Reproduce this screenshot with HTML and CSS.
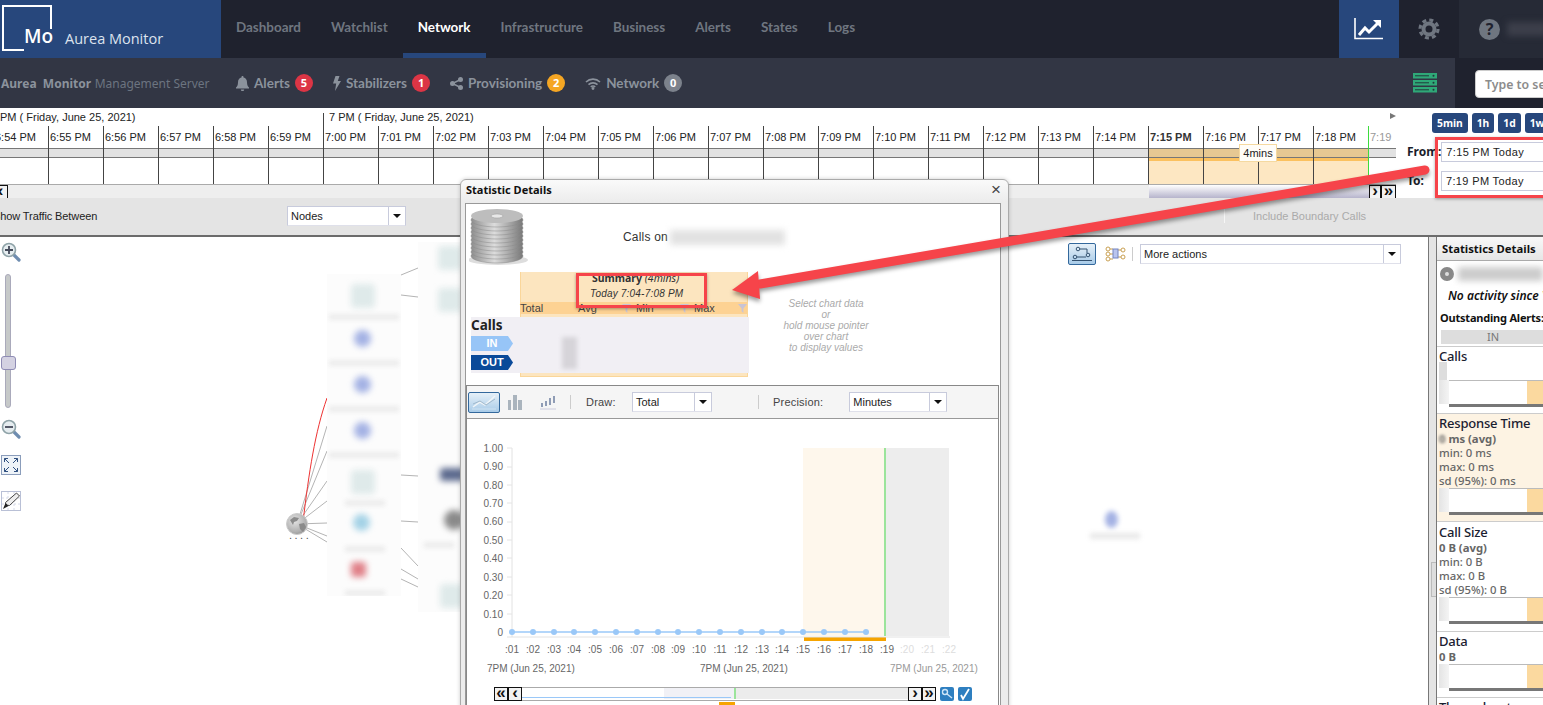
FILE: index.html
```html
<!DOCTYPE html>
<html lang="en">
<head>
    <meta charset="UTF-8">
    <title>Aurea Monitor</title>
    <link rel="stylesheet" href="styles.css">
</head>
<body>
<div class="app">

    <!-- Top bar -->
    <div class="topbar">
        <div class="brand">
            <div class="logo"><span>Mo</span></div>
            <div class="brand-name">Aurea Monitor</div>
        </div>
        <div class="nav">
            <a class="nav-item">Dashboard</a>
            <a class="nav-item">Watchlist</a>
            <a class="nav-item active">Network</a>
            <a class="nav-item">Infrastructure</a>
            <a class="nav-item">Business</a>
            <a class="nav-item">Alerts</a>
            <a class="nav-item">States</a>
            <a class="nav-item">Logs</a>
        </div>
        <div class="top-btn chart-btn">
            <svg width="30" height="22" viewBox="0 0 30 22"><path d="M1 0v20.500h28" fill="none" stroke="#fff" stroke-width="1.600"/><path d="M5 17l6-7 4 4 9-9" fill="none" stroke="#fff" stroke-width="3"/><path d="M19 2h8v8z" fill="#fff"/></svg>
        </div>
        <div class="top-btn">
            <svg width="22" height="22" viewBox="0 0 22 22"><circle cx="11" cy="11" r="5.500" fill="none" stroke="#6f7680" stroke-width="4"/><circle cx="11" cy="11" r="9" fill="none" stroke="#6f7680" stroke-width="3.200" stroke-dasharray="4 3.070"/></svg>
        </div>
        <div class="top-user">
            <span class="help">?</span>
            <span class="user-blur"></span>
        </div>
    </div>

    <!-- Server bar -->
    <div class="subbar">
        <div class="subbar-main">
            <div class="server-name"><b>Aurea&nbsp; Monitor</b> <span>Management Server</span></div>
            <div class="sub-item">
                <svg width="13" height="15" viewBox="0 0 13 15"><path d="M6.500 0c.6 0 1 .4 1 1v.6c2.300.5 3.500 2.400 3.500 4.600 0 3.300 1 4.400 2 5.300v1H0v-1c1-.9 2-2 2-5.300 0-2.200 1.200-4.100 3.500-4.600V1c0-.6.400-1 1-1zM4.800 13.500h3.400c0 1-.7 1.500-1.700 1.500s-1.700-.5-1.700-1.500z" fill="#8b929c"/></svg>
                Alerts <span class="count red">5</span>
            </div>
            <div class="sub-item">
                <svg width="8" height="15" viewBox="0 0 8 15"><path d="M2.500 0h4L4.800 5H8L2 15l1.200-7.500H0z" fill="#8b929c"/></svg>
                Stabilizers <span class="count red">1</span>
            </div>
            <div class="sub-item">
                <svg width="13" height="13" viewBox="0 0 13 13"><circle cx="2.500" cy="6.500" r="2.500" fill="#8b929c"/><circle cx="10.500" cy="2.500" r="2.500" fill="#8b929c"/><circle cx="10.500" cy="10.500" r="2.500" fill="#8b929c"/><path d="M10.500 2.500l-8 4 8 4" fill="none" stroke="#8b929c" stroke-width="1.400"/></svg>
                Provisioning <span class="count amber">2</span>
            </div>
            <div class="sub-item">
                <svg width="16" height="13" viewBox="0 0 16 13"><path d="M1 5a10 10 0 0 1 14 0M3.500 7.700a6.500 6.500 0 0 1 9 0M5.800 10a3 3 0 0 1 4.400 0" fill="none" stroke="#8b929c" stroke-width="1.600"/><circle cx="8" cy="11.500" r="1.400" fill="#8b929c"/></svg>
                Network <span class="count grey">0</span>
            </div>
            <svg class="server-stack" width="24" height="20" viewBox="0 0 24 20">
                <g fill="#2fa878"><rect width="24" height="5.500"/><rect y="7" width="24" height="5.500"/><rect y="14" width="24" height="5.500"/></g>
                <g stroke="#1f3a3a" stroke-width="1"><path d="M2 2.800h14M2 9.800h14M2 16.800h14"/></g>
                <g fill="#1f3a3a"><circle cx="20.500" cy="2.800" r="1"/><circle cx="20.500" cy="9.800" r="1"/><circle cx="20.500" cy="16.800" r="1"/></g>
            </svg>
        </div>
        <div class="subbar-search">
            <div class="search-box">Type to search</div>
        </div>
    </div>

    <!-- Timeline -->
    <div class="timeline">
        <div class="tl-track">
            <div class="tl-hours">
                <div class="tl-hour first">PM ( Friday, June 25, 2021)</div>
                <div class="tl-hour">7 PM ( Friday, June 25, 2021)</div>
            </div>
            <div class="tl-cols">
                <div class="tl-col"><div class="tl-label">6:54 PM</div><div class="tl-band"></div><div class="tl-body"></div></div>
                <div class="tl-col"><div class="tl-label">6:55 PM</div><div class="tl-band"></div><div class="tl-body"></div></div>
                <div class="tl-col"><div class="tl-label">6:56 PM</div><div class="tl-band"></div><div class="tl-body"></div></div>
                <div class="tl-col"><div class="tl-label">6:57 PM</div><div class="tl-band"></div><div class="tl-body"></div></div>
                <div class="tl-col"><div class="tl-label">6:58 PM</div><div class="tl-band"></div><div class="tl-body"></div></div>
                <div class="tl-col"><div class="tl-label">6:59 PM</div><div class="tl-band"></div><div class="tl-body"></div></div>
                <div class="tl-col"><div class="tl-label">7:00 PM</div><div class="tl-band"></div><div class="tl-body"></div></div>
                <div class="tl-col"><div class="tl-label">7:01 PM</div><div class="tl-band"></div><div class="tl-body"></div></div>
                <div class="tl-col"><div class="tl-label">7:02 PM</div><div class="tl-band"></div><div class="tl-body"></div></div>
                <div class="tl-col"><div class="tl-label">7:03 PM</div><div class="tl-band"></div><div class="tl-body"></div></div>
                <div class="tl-col"><div class="tl-label">7:04 PM</div><div class="tl-band"></div><div class="tl-body"></div></div>
                <div class="tl-col"><div class="tl-label">7:05 PM</div><div class="tl-band"></div><div class="tl-body"></div></div>
                <div class="tl-col"><div class="tl-label">7:06 PM</div><div class="tl-band"></div><div class="tl-body"></div></div>
                <div class="tl-col"><div class="tl-label">7:07 PM</div><div class="tl-band"></div><div class="tl-body"></div></div>
                <div class="tl-col"><div class="tl-label">7:08 PM</div><div class="tl-band"></div><div class="tl-body"></div></div>
                <div class="tl-col"><div class="tl-label">7:09 PM</div><div class="tl-band"></div><div class="tl-body"></div></div>
                <div class="tl-col"><div class="tl-label">7:10 PM</div><div class="tl-band"></div><div class="tl-body"></div></div>
                <div class="tl-col"><div class="tl-label">7:11 PM</div><div class="tl-band"></div><div class="tl-body"></div></div>
                <div class="tl-col"><div class="tl-label">7:12 PM</div><div class="tl-band"></div><div class="tl-body"></div></div>
                <div class="tl-col"><div class="tl-label">7:13 PM</div><div class="tl-band"></div><div class="tl-body"></div></div>
                <div class="tl-col"><div class="tl-label">7:14 PM</div><div class="tl-band"></div><div class="tl-body"></div></div>
                <div class="tl-col sel"><div class="tl-label now">7:15 PM</div><div class="tl-band"></div><div class="tl-body"></div></div>
                <div class="tl-col sel"><div class="tl-label">7:16 PM</div><div class="tl-band"></div><div class="tl-body"></div></div>
                <div class="tl-col sel"><div class="tl-label">7:17 PM</div><div class="tl-band"></div><div class="tl-body"></div></div>
                <div class="tl-col sel"><div class="tl-label">7:18 PM</div><div class="tl-band"></div><div class="tl-body"></div></div>
                <div class="tl-col last"><div class="tl-label">7:19</div><div class="tl-band"></div><div class="tl-body"></div></div>
            </div>
            <div class="tl-scroll">
                <span class="arrow-btn clip">&#8249;</span>
                <div class="tl-scroll-track"></div>
                <div class="tl-scroll-thumb"></div>
                <span class="arrow-btn narrow">&#8250;</span>
                <span class="arrow-btn">&#187;</span>
            </div>
            <div class="tl-tag">4mins</div>
            <div class="tl-play"></div>
        </div>
        <div class="tl-side">
            <div class="range-btns">
                <span class="range-btn">5min</span>
                <span class="range-btn">1h</span>
                <span class="range-btn">1d</span>
                <span class="range-btn">1w</span>
            </div>
            <div class="range-row from"><label>From:</label><div class="range-input">7:15 PM Today</div></div>
            <div class="range-row"><label>To:</label><div class="range-input">7:19 PM Today</div></div>
        </div>
    </div>

    <!-- Traffic toolbar -->
    <div class="toolbar">
        <div class="traffic-label">Show Traffic Between</div>
        <div class="combo nodes-combo"><span>Nodes</span><i></i></div>
        <div class="toolbar-sep"></div>
        <div class="boundary">Include Boundary Calls</div>
    </div>

    <!-- Map and statistics -->
    <div class="main">
        <div class="canvas">
            <div class="map-tools">
                <svg width="20" height="20" viewBox="0 0 20 20"><path d="M12 12l6 6" stroke="#6f8db0" stroke-width="3.200" stroke-linecap="round"/><circle cx="8" cy="8" r="6.500" fill="#e6edf0" stroke="#8fa3a8" stroke-width="1.600"/><path d="M4 8h8M8 4v8" stroke="#444a5a" stroke-width="1.800"/></svg>
                <div class="slider"><div class="slider-thumb"></div></div>
                <svg width="20" height="20" viewBox="0 0 20 20"><path d="M12 12l6 6" stroke="#6f8db0" stroke-width="3.200" stroke-linecap="round"/><circle cx="8" cy="8" r="6.500" fill="#e6edf0" stroke="#8fa3a8" stroke-width="1.600"/><path d="M4 8h8" stroke="#444a5a" stroke-width="1.800"/></svg>
                <svg class="tool-box" width="20" height="20" viewBox="0 0 20 20"><rect x=".5" y=".5" width="19" height="19" fill="#eef3f8" stroke="#8b9dbb"/><path d="M8 8L3.500 3.500M12 8l4.500-4.500M8 12l-4.500 4.500M12 12l4.500 4.500M3.500 7V3.500H7M13 3.500h3.500V7M3.500 13v3.500H7M13 16.500h3.500V13" fill="none" stroke="#2f4f7f" stroke-width="1"/></svg>
                <svg class="tool-box" width="20" height="20" viewBox="0 0 20 20"><rect x=".5" y=".5" width="19" height="19" fill="#fff" stroke="#b9c0d6"/><path d="M1 7h18M1 13h18M7 1v18M13 1v18" stroke="#d6dae8" stroke-dasharray="2 2"/><path d="M15.500 2l3 3-10 9.500-3.500-.5-.5-2.500z" fill="#eee" stroke="#444" stroke-width="1"/><path d="M4.500 12L2 18l5.500-3z" fill="#222"/></svg>
            </div>

            <svg class="map-lines" width="470" height="370" viewBox="0 0 470 370">
                <g fill="none" stroke="#b4b4b4" stroke-width="1">
                    <path d="M62 287 L92 189"/><path d="M62 287 L92 214"/><path d="M62 287 L92 244"/><path d="M62 287 L92 264"/>
                    <path d="M62 287 L92 286"/><path d="M62 287 L92 299"/><path d="M62 287 L92 305"/>
                    <path d="M166 38 L183 31"/><path d="M166 58 L183 60"/><path d="M166 238 L183 239"/><path d="M166 284 L183 285"/>
                    <path d="M166 311 L183 329"/><path d="M166 332 L183 342"/><path d="M166 342 L183 350"/>
                </g>
                <path d="M68 285 C74 235 80 195 92 161" fill="none" stroke="#ee3333" stroke-width="1"/>
            </svg>

            <div class="map-pane pane-a">
                <div class="node teal a1"></div><div class="node-text a2"></div>
                <div class="node blue a3"></div><div class="node-text a4"></div>
                <div class="node blue a5"></div><div class="node-text a6"></div>
                <div class="node blue a7"></div><div class="node-text a8"></div>
                <div class="node teal a9"></div><div class="node-text a10"></div>
                <div class="node sky a11"></div><div class="node-text a12"></div>
                <div class="node rose a13"></div><div class="node-text a14"></div>
            </div>
            <div class="map-pane pane-b">
                <div class="node teal b1"></div>
                <div class="node teal b2"></div>
                <div class="node navy b3"></div>
                <div class="node dark b4"></div><div class="node-text b5"></div>
                <div class="node teal b6"></div>
            </div>

            <svg class="globe" width="22" height="22" viewBox="0 0 22 22">
                <defs>
                    <radialGradient id="globeFill" cx=".4" cy=".35" r=".75">
                        <stop offset="0" stop-color="#e4e4e4"/><stop offset=".7" stop-color="#b0b0b0"/><stop offset="1" stop-color="#8a8a8a"/>
                    </radialGradient>
                </defs>
                <circle cx="11" cy="11" r="10.500" fill="url(#globeFill)" stroke="#ccc"/>
                <path d="M4 7l4-3 5 1-2 3-3 1-1 3zM13 11l5-1 2 4-3 5-3-3z" fill="#8b8b8b"/>
            </svg>
            <div class="globe-label">....</div>

            <div class="far-node"></div>
            <div class="far-text"></div>

            <div class="map-actions">
                <span class="view-btn">
                    <svg width="22" height="16" viewBox="0 0 22 16"><g fill="none" stroke="#33516f" stroke-width="1"><circle cx="7" cy="3" r="1.800"/><circle cx="4" cy="11" r="1.800"/><circle cx="17" cy="9" r="1.800"/><path d="M9 3h7v4M6 11h9M1 14.500h20"/></g></svg>
                </span>
                <svg class="view-tree" width="21" height="16" viewBox="0 0 21 16"><path d="M5 3h3M5 8h3M5 13h3M13 4h3M13 11h3" stroke="#c9a052"/><g fill="#fff" stroke="#c9a052"><circle cx="3" cy="3" r="2"/><circle cx="3" cy="8" r="2"/><circle cx="3" cy="13" r="2"/><circle cx="18" cy="4" r="2"/><circle cx="18" cy="11" r="2"/></g><rect x="8" y="3" width="5" height="9" fill="#b9c4ee" stroke="#7384c0"/></svg>
                <span class="actions-sep"></span>
                <div class="combo actions-combo"><span>More actions</span><i></i></div>
            </div>
        </div>

        <div class="gutter"><div class="gutter-handle"></div></div>

        <div class="stats">
            <div class="stats-head">Statistics Details</div>
            <div class="stats-node"><span class="disc"></span><span class="stats-blur"></span></div>
            <div class="stats-idle">No activity since Yesterday</div>
            <div class="stats-alerts">Outstanding Alerts:</div>
            <div class="stats-in">IN</div>

            <div class="stat">
                <h4>Calls</h4>
                <div class="stat-blur"></div>
                <div class="spark"></div>
            </div>
            <div class="stat hot">
                <h4>Response Time</h4>
                <p class="lead"><span class="hidden-digit">0</span> ms (avg)</p>
                <p>min: 0 ms</p>
                <p>max: 0 ms</p>
                <p>sd (95%): 0 ms</p>
                <div class="spark"></div>
            </div>
            <div class="stat size">
                <h4>Call Size</h4>
                <p class="lead">0 B (avg)</p>
                <p>min: 0 B</p>
                <p>max: 0 B</p>
                <p>sd (95%): 0 B</p>
                <div class="spark"></div>
            </div>
            <div class="stat">
                <h4>Data</h4>
                <p class="lead">0 B</p>
                <div class="spark"></div>
            </div>
            <div class="stat">
                <h4>Throughput</h4>
            </div>
        </div>
    </div>

    <!-- Floating window -->
    <div class="dialog">
        <div class="dialog-title"><span>Statistic Details</span><span class="dialog-close">&#215;</span></div>
        <div class="dialog-body">
            <div class="dialog-top">
                <svg class="disks" width="60" height="60" viewBox="0 0 60 60">
                    <defs>
                        <linearGradient id="disk" x1="0" x2="1" y1="0" y2="0">
                            <stop offset="0" stop-color="#8d8d8d"/><stop offset=".45" stop-color="#dcdcdc"/><stop offset="1" stop-color="#777"/>
                        </linearGradient>
                    </defs>
                    <ellipse cx="29" cy="54" rx="30" ry="5" fill="#ddd"/>
                    <g fill="url(#disk)" stroke="#8a8a8a" stroke-width=".5">
                        <ellipse cx="28" cy="50" rx="26" ry="7"/><ellipse cx="28" cy="46" rx="26" ry="7"/><ellipse cx="28" cy="42" rx="26" ry="7"/>
                        <ellipse cx="28" cy="38" rx="26" ry="7"/><ellipse cx="28" cy="34" rx="26" ry="7"/><ellipse cx="28" cy="30" rx="26" ry="7"/>
                        <ellipse cx="28" cy="26" rx="26" ry="7"/><ellipse cx="28" cy="22" rx="26" ry="7"/><ellipse cx="28" cy="18" rx="26" ry="7"/>
                        <ellipse cx="28" cy="14" rx="26" ry="7"/>
                    </g>
                    <ellipse cx="28" cy="10" rx="26" ry="7" fill="#bdbdbd"/>
                    <ellipse cx="28" cy="10" rx="6" ry="2" fill="#e8e8e8" stroke="#999" stroke-width=".5"/>
                </svg>
                <div class="calls-on">Calls on <span class="calls-blur"></span></div>
            </div>

            <div class="summary-row">
                <div class="summary-wrap">
                    <div class="summary">
                        <div class="summary-head">
                            <div class="summary-title">Summary <em>(4mins)</em></div>
                            <div class="summary-date">Today 7:04-7:08 PM</div>
                        </div>
                        <div class="summary-cols">
                            <span>Total</span>
                            <span class="filter">Avg</span>
                            <span class="filter">Min</span>
                            <span class="filter">Max</span>
                        </div>
                    </div>
                    <div class="summary-data">
                        <div class="data-label">Calls</div>
                        <div class="tag in">IN</div>
                        <div class="tag out">OUT</div>
                        <div class="data-blur"></div>
                    </div>
                </div>
                <div class="hint">Select chart data<br>or<br>hold mouse pointer<br>over chart<br>to display values</div>
            </div>

            <div class="chart-panel">
                <div class="chart-tools">
                    <span class="chart-type">
                        <svg width="26" height="16" viewBox="0 0 26 16"><path d="M1 15h24" stroke="#cfe3f2"/><path d="M2 13l7-5 5 3 10-9" fill="none" stroke="#f0f5f8" stroke-width="1.500"/><path d="M2 10l7-3 6 4 9-6" fill="none" stroke="#9fb8cc" stroke-width="1"/></svg>
                    </span>
                    <svg class="chart-type-icon" width="18" height="16" viewBox="0 0 18 16"><path d="M2 6h3v10H2zM7 1h4v15H7zM12 6h4v10h-4z" fill="#aab4bd"/></svg>
                    <svg class="chart-type-icon" width="18" height="16" viewBox="0 0 18 16"><path d="M1 15h16" stroke="#ccd"/><path d="M3 9v4M7 7v5M11 4v7M15 2v7" stroke="#8f9cb5" stroke-width="2"/></svg>
                    <span class="chart-sep"></span>
                    <span class="chart-label">Draw:</span>
                    <div class="combo draw-combo"><span>Total</span><i></i></div>
                    <span class="chart-sep wide"></span>
                    <span class="chart-label">Precision:</span>
                    <div class="combo precision-combo"><span>Minutes</span><i></i></div>
                </div>
                <svg class="chart" width="530" height="286" viewBox="0 0 530 286">
                    <rect x="337" y="29" width="82" height="188" fill="#fef7ec"/>
                    <rect x="420" y="29" width="63" height="188" fill="#ededed"/>
                    <path d="M419 29v188" stroke="#9be49b" stroke-width="2"/>
                    <rect x="338" y="218" width="82" height="4" fill="#f6a400"/>
                    <path d="M46 29v189M41 218h443" stroke="#e2e2e2" stroke-width="1" fill="none"/>
                    <g stroke="#e4e4e4"><path d="M41 29h5M41 48h5M41 66h5M41 84h5M41 103h5M41 121h5M41 139h5M41 158h5M41 176h5M41 195h5"/></g>
                    <g class="y-labels" text-anchor="end">
                        <text x="37" y="33">1.00</text><text x="37" y="51">0.90</text><text x="37" y="70">0.80</text><text x="37" y="88">0.70</text><text x="37" y="106">0.60</text>
                        <text x="37" y="125">0.50</text><text x="37" y="143">0.40</text><text x="37" y="162">0.30</text><text x="37" y="180">0.20</text><text x="37" y="199">0.10</text><text x="37" y="217">0</text>
                    </g>
                    <path d="M46 213H400" stroke="#9ac8f8" stroke-width="1.500"/>
                    <g fill="#9ac8f8">
                        <circle cx="46" cy="213" r="3"/><circle cx="67" cy="213" r="3"/><circle cx="88" cy="213" r="3"/><circle cx="108" cy="213" r="3"/><circle cx="129" cy="213" r="3"/>
                        <circle cx="150" cy="213" r="3"/><circle cx="171" cy="213" r="3"/><circle cx="192" cy="213" r="3"/><circle cx="212" cy="213" r="3"/><circle cx="233" cy="213" r="3"/>
                        <circle cx="254" cy="213" r="3"/><circle cx="275" cy="213" r="3"/><circle cx="296" cy="213" r="3"/><circle cx="316" cy="213" r="3"/><circle cx="337" cy="213" r="3"/>
                        <circle cx="358" cy="213" r="3"/><circle cx="379" cy="213" r="3"/><circle cx="400" cy="213" r="3"/>
                    </g>
                    <g class="x-labels" text-anchor="middle">
                        <text x="46" y="234">:01</text><text x="67" y="234">:02</text><text x="88" y="234">:03</text><text x="108" y="234">:04</text><text x="129" y="234">:05</text>
                        <text x="150" y="234">:06</text><text x="171" y="234">:07</text><text x="192" y="234">:08</text><text x="212" y="234">:09</text><text x="233" y="234">:10</text>
                        <text x="254" y="234">:11</text><text x="275" y="234">:12</text><text x="296" y="234">:13</text><text x="316" y="234">:14</text><text x="337" y="234">:15</text>
                        <text x="358" y="234">:16</text><text x="379" y="234">:17</text><text x="400" y="234">:18</text><text x="421" y="234">:19</text>
                        <text x="441" y="234" class="dim">:20</text><text x="462" y="234" class="dim">:21</text><text x="483" y="234" class="dim">:22</text>
                    </g>
                    <g class="date-labels">
                        <text x="21" y="253">7PM (Jun 25, 2021)</text><text x="234" y="253">7PM (Jun 25, 2021)</text><text x="424" y="253" class="mute">7PM (Jun 25, 2021)</text>
                    </g>
                </svg>
                <div class="chart-scroll">
                    <span class="arrow-btn sm">&#171;</span>
                    <span class="arrow-btn sm">&#8249;</span>
                    <div class="mini">
                        <div class="mini-sel"></div>
                        <div class="mini-rest"></div>
                        <div class="mini-line"></div>
                    </div>
                    <span class="arrow-btn sm">&#8250;</span>
                    <span class="arrow-btn sm">&#187;</span>
                    <svg class="mini-icon" width="14" height="14" viewBox="0 0 14 14"><rect width="14" height="14" rx="2" fill="#2e7fc0"/><circle cx="5" cy="5" r="2.500" fill="none" stroke="#cfe6f8" stroke-width="1.400"/><path d="M7 7l5 4" stroke="#cfe6f8" stroke-width="1.400"/></svg>
                    <svg class="mini-icon" width="14" height="14" viewBox="0 0 14 14"><rect width="14" height="14" rx="2" fill="#2e7fc0"/><path d="M3 8l2 4 6-10" fill="none" stroke="#fff" stroke-width="1.800"/></svg>
                </div>
                <div class="mini-mark"></div>
            </div>
        </div>
    </div>

    <!-- Annotations -->
    <div class="mark mark-range"></div>
    <div class="mark mark-summary"></div>
    <svg class="mark-arrow" width="720" height="170" viewBox="0 0 720 170">
        <path d="M707 27 L42 141" stroke="#f6444a" stroke-width="9" stroke-linecap="round"/>
        <path d="M14 147 L40 128 L42 156 Z" fill="#f6444a"/>
    </svg>
</div>
</body>
</html>
```

FILE: styles.css
```css
* {
    margin: 0;
    padding: 0;
    box-sizing: border-box;
}

html, body {
    width: 1543px;
    height: 705px;
    overflow: hidden;
    background: #fff;
}

body {
    font-family: 'Liberation Sans', Arial, sans-serif;
    font-size: 11px;
    color: #222;
}

.app {
    position: relative;
    width: 1543px;
    height: 705px;
    overflow: hidden;
}

/* Top bar */
.topbar {
    display: flex;
    height: 58px;
    background: #1f222e;
}

.brand {
    display: flex;
    flex: 0 0 221px;
    background: #27477c;
    padding: 5px 0 0 2px;
    color: #fff;
}

.logo {
    position: relative;
    width: 50px;
    height: 46px;
    border: 2px solid #fff;
    border-right: 0;
}

.logo::after {
    content: '';
    position: absolute;
    right: 0;
    top: 0;
    width: 2px;
    height: 22px;
    background: #fff;
}

.logo span {
    position: absolute;
    left: 20px;
    top: 18px;
    padding-bottom: 3px;
    background: #27477c;
    font: 600 19px/23px 'Open Sans', sans-serif;
    color: #fff;
}

.brand-name {
    font-family: 'Open Sans', sans-serif;
    font-size: 14.500px;
    margin: 24px 0 0 13px;
    color: #dde3ee;
}

.nav {
    display: flex;
    flex: 1;
    min-width: 0;
}

.nav-item {
    font-family: Lato, sans-serif;
    font-size: 13.450px;
    font-weight: 700;
    color: #6f7680;
    padding: 0 15px;
    line-height: 55px;
    height: 58px;
}

.nav-item.active {
    color: #fff;
    border-bottom: 5px solid #27477c;
}

.top-btn {
    display: flex;
    align-items: center;
    justify-content: center;
    flex: 0 0 60px;
}

.chart-btn {
    background: #27477c;
}

.top-user {
    display: flex;
    align-items: center;
    flex: 0 0 84px;
    min-width: 0;
    background: #262a36;
    padding-left: 20px;
    overflow: hidden;
}

.help {
    flex: 0 0 21px;
    height: 21px;
    border-radius: 50%;
    background: #6f7680;
    color: #1f222e;
    font: bold 16px/21px 'Noto Sans', sans-serif;
    text-align: center;
}

.user-blur {
    flex: 0 0 40px;
    height: 14px;
    margin-left: 7px;
    background: #3c3f4a;
    filter: blur(3px);
}

/* Server bar */
.subbar {
    display: flex;
    height: 50px;
    background: #1f222e;
}

.subbar-main {
    display: flex;
    align-items: center;
    flex: 0 0 1455px;
    background: #323644;
    padding-left: 1px;
    font-family: Lato, sans-serif;
    font-size: 13.500px;
    color: #8b929c;
}

.server-name {
    width: 235px;
    font-family: 'Noto Sans', sans-serif;
}

.server-name b {
    font-size: 12px;
}

.server-name span {
    color: #6c7480;
    font-size: 12px;
}

.sub-item {
    display: flex;
    align-items: center;
    gap: 5px;
    font-weight: 700;
    margin-right: 20px;
}

.count {
    width: 18px;
    height: 18px;
    border-radius: 50%;
    color: #fff;
    font: bold 11px/18px 'Noto Sans', sans-serif;
    text-align: center;
}

.count.red { background: #dc3545; }
.count.amber { background: #f5a623; }
.count.grey { background: #7c828c; }

.server-stack {
    margin-left: auto;
    margin-right: 18px;
}

.subbar-search {
    flex: 1;
    padding: 12px 0 0 20px;
}

.search-box {
    width: 120px;
    height: 28px;
    background: #fff;
    border: 1px solid #ccc;
    border-radius: 4px;
    padding-left: 9px;
    font: 600 12.300px/28px 'Noto Sans', sans-serif;
    color: #8c8c8c;
    white-space: nowrap;
}

/* Timeline */
.timeline {
    display: flex;
    height: 90px;
    background: #fff;
}

.tl-track {
    position: relative;
    flex: 0 0 1396px;
    overflow: hidden;
}

.tl-hours {
    display: flex;
    height: 18px;
    font-size: 11px;
}

.tl-hour {
    margin-top: 5px;
    padding: 0 0 0 5px;
    height: 13px;
    line-height: 8px;
    border-left: 1px solid #444;
}

.tl-hour.first {
    width: 323px;
    padding-left: 0;
    border-left: 0;
}

.tl-cols {
    display: flex;
    margin-left: -7px;
    height: 58px;
}

.tl-col {
    flex: 0 0 55px;
    display: flex;
    flex-direction: column;
    border-left: 1px solid #444;
}

.tl-col.last {
    flex-basis: 28px;
    border-left: 1px solid #3ddc3d;
    overflow: hidden;
    white-space: nowrap;
}

.tl-label {
    height: 23px;
    padding: 5px 0 0 1px;
    border-bottom: 1px solid #777;
    white-space: nowrap;
}

.tl-label.now {
    font-weight: 700;
    color: #333;
}

.last .tl-label {
    color: #999;
}

.tl-band {
    height: 9px;
    background: #e2e2e2;
    border-bottom: 1px solid #777;
}

.tl-body {
    flex: 1;
}

.sel .tl-band {
    background: #e6c892;
}

.sel .tl-body {
    background: #fde7c2;
    border-top: 3px solid #fbc15f;
}

.tl-scroll {
    display: flex;
    height: 14px;
    background: #eee;
    border-top: 1px solid #aaa;
}

.tl-scroll-track {
    width: 1141px;
    margin-left: 8px;
}

.tl-scroll-thumb {
    width: 220px;
    background: linear-gradient(#fff, #b6b4cc);
}

.arrow-btn {
    flex: 0 0 15px;
    height: 14px;
    background: #f2f2f2;
    border: 1px solid #111;
    font: bold 17px/9px 'Liberation Sans', sans-serif;
    text-align: center;
    color: #111;
    overflow: hidden;
}

.arrow-btn.narrow {
    flex-basis: 12px;
}

.arrow-btn.clip {
    position: absolute;
    left: -7px;
    width: 15px;
}

.tl-tag {
    position: absolute;
    left: 1239px;
    top: 36px;
    width: 38px;
    height: 18px;
    background: #fffdf8;
    border: 1px solid #f5d9a0;
    text-align: center;
    font-size: 11px;
    line-height: 16px;
}

.tl-play {
    position: absolute;
    right: 0;
    top: 5px;
    border-left: 6px solid #777;
    border-top: 3px solid transparent;
    border-bottom: 3px solid transparent;
}

.tl-side {
    flex: 1;
    padding: 5px 0 0 0;
}

.range-btns {
    display: flex;
    gap: 4px;
    margin-left: 36px;
    white-space: nowrap;
}

.range-btn {
    padding: 0 5px;
    height: 20px;
    background: #27477c;
    color: #fff;
    border-radius: 3px;
    font: 700 10.300px/20px 'Noto Sans', sans-serif;
}

.range-row {
    display: flex;
    align-items: center;
    height: 29px;
}

.range-row.from {
    margin-top: 4px;
}

.range-row label {
    flex: 0 0 45px;
    padding-left: 11px;
    font: 700 12px 'Noto Sans', sans-serif;
    color: #1a1d2a;
    white-space: nowrap;
}

.range-input {
    flex: 0 0 110px;
    height: 20px;
    border: 1px solid #c8cbdc;
    padding-left: 4px;
    line-height: 18px;
    letter-spacing: .35px;
    white-space: nowrap;
}

/* Traffic toolbar */
.toolbar {
    display: flex;
    align-items: center;
    height: 39px;
    background: #e4e4e4;
    border-bottom: 2px solid #6b6b6b;
    padding-bottom: 2px;
}

.traffic-label {
    flex: 0 0 294px;
    margin-left: -7px;
    letter-spacing: -.1px;
}

.combo {
    display: flex;
    height: 20px;
    background: #fff;
    border: 1px solid #c8cbdc;
    border-bottom-color: #dfe0ea;
    line-height: 18px;
}

.combo span {
    flex: 1;
    padding-left: 3px;
}

.combo i {
    position: relative;
    width: 17px;
    border-left: 1px solid #c8cbdc;
}

.combo i::after {
    content: '';
    position: absolute;
    left: 4px;
    top: 7px;
    border-top: 4px solid #111;
    border-left: 4px solid transparent;
    border-right: 4px solid transparent;
}

.nodes-combo {
    width: 119px;
}

.toolbar-sep {
    width: 1px;
    height: 14px;
    margin-left: 818px;
    background: #f6f6f6;
}

.boundary {
    margin-left: 28px;
    color: #aaa;
    white-space: nowrap;
}

/* Map and statistics */
.main {
    display: flex;
    height: 468px;
}

.canvas {
    position: relative;
    flex: 0 0 1429px;
    background: #fff;
    border-right: 1px solid #777;
}

.map-tools {
    display: flex;
    flex-direction: column;
    align-items: flex-start;
    padding: 5px 0 0 1px;
}

.slider {
    position: relative;
    width: 6px;
    height: 134px;
    margin: 12px 0 11px 4px;
    background: #c6c9c9;
    border: 1px solid #aab;
    border-radius: 3px;
}

.slider-thumb {
    position: absolute;
    left: -5px;
    top: 81px;
    width: 15px;
    height: 14px;
    background: #d4d2e2;
    border: 1px solid #8f8cb5;
    border-radius: 3px;
}

.tool-box {
    margin-top: 16px;
}

.map-lines {
    position: absolute;
    left: 235px;
    top: 0;
}

.map-pane {
    position: absolute;
    background: #fcfcfc;
    overflow: hidden;
}

.pane-a {
    left: 327px;
    top: 37px;
    width: 74px;
    height: 322px;
}

.pane-b {
    left: 418px;
    top: 5px;
    width: 44px;
    height: 370px;
}

.node {
    position: absolute;
    width: 17px;
    height: 17px;
    border-radius: 50%;
    filter: blur(3px);
}

.node.teal { background: #dfeaea; width: 24px; height: 24px; border-radius: 4px; }
.node.blue { background: #a4b2e4; }
.node.sky { background: #a4d2e6; }
.node.rose { background: #e08088; width: 15px; height: 15px; border-radius: 3px; }
.node.navy { background: #5c6a8e; width: 24px; height: 13px; border-radius: 3px; }
.node.dark { background: #8a8a8a; width: 20px; height: 20px; }

.node-text {
    position: absolute;
    height: 6px;
    background: #ececec;
    filter: blur(2px);
}

.a1 { left: 24px; top: 10px; }
.a2 { left: 2px; top: 40px; width: 70px; }
.a3 { left: 27px; top: 56px; }
.a4 { left: 2px; top: 86px; width: 70px; }
.a5 { left: 27px; top: 102px; }
.a6 { left: 2px; top: 132px; width: 70px; }
.a7 { left: 27px; top: 148px; }
.a8 { left: 2px; top: 178px; width: 70px; }
.a9 { left: 24px; top: 196px; }
.a10 { left: 18px; top: 226px; width: 40px; }
.a11 { left: 26px; top: 240px; }
.a12 { left: 18px; top: 272px; width: 40px; }
.a13 { left: 24px; top: 288px; }
.a14 { left: 18px; top: 316px; width: 40px; }

.b1 { left: 20px; top: 4px; }
.b2 { left: 20px; top: 46px; }
.b3 { left: 22px; top: 226px; }
.b4 { left: 26px; top: 268px; }
.b5 { left: 6px; top: 300px; width: 30px; }
.b6 { left: 22px; top: 342px; }

.globe {
    position: absolute;
    left: 286px;
    top: 276px;
}

.globe-label {
    position: absolute;
    left: 289px;
    top: 292px;
    letter-spacing: 2.500px;
    font-size: 11px;
    color: #555;
}

.far-node {
    position: absolute;
    left: 1105px;
    top: 274px;
    width: 13px;
    height: 17px;
    background: #a4b2e4;
    border-radius: 50%;
    filter: blur(2.500px);
}

.far-text {
    position: absolute;
    left: 1090px;
    top: 296px;
    width: 50px;
    height: 6px;
    background: #e8e8e8;
    filter: blur(2.500px);
}

.map-actions {
    position: absolute;
    left: 1068px;
    top: 6px;
    display: flex;
    align-items: center;
}

.view-btn {
    display: flex;
    align-items: center;
    justify-content: center;
    width: 28px;
    height: 22px;
    border: 1px solid #33689c;
    border-radius: 2px;
    background: linear-gradient(#e6f0f8, #a8cbe8);
}

.view-tree {
    margin-left: 9px;
}

.actions-sep {
    width: 1px;
    height: 14px;
    margin: 0 7px 0 6px;
    background: #ccc;
}

.actions-combo {
    width: 261px;
}

.gutter {
    position: relative;
    flex: 0 0 8px;
    background: #e4e4e4;
    border-right: 1px solid #777;
}

.gutter-handle {
    position: absolute;
    left: 2px;
    top: 325px;
    width: 5px;
    height: 35px;
    background: #ddd;
    border: 1px solid #bbb;
    border-right: 0;
}

.stats {
    flex: 1;
    min-width: 0;
    font-family: 'Noto Sans', sans-serif;
    background: #fff;
    white-space: nowrap;
    overflow: hidden;
}

.stats-head {
    height: 24px;
    padding-left: 5px;
    background: linear-gradient(#f8f8f8, #e6e6e6);
    border-bottom: 1px solid #aaa;
    font: 700 11.300px/23px 'Noto Sans', sans-serif;
    color: #111;
}

.stats-node {
    display: flex;
    align-items: center;
    height: 26px;
    padding-left: 3px;
}

.disc {
    width: 14px;
    height: 14px;
    border-radius: 50%;
    background: #ddd;
    border: 5px solid #888;
}

.stats-blur {
    width: 90px;
    height: 14px;
    margin-left: 4px;
    background: #ccc;
    filter: blur(3px);
}

.stats-idle {
    margin: 1px 0 0 11px;
    font-size: 12px;
    font-style: italic;
    font-weight: 600;
    line-height: 16px;
    color: #111;
}

.stats-alerts {
    margin: 7px 0 0 3px;
    font-size: 11px;
    font-weight: 700;
    line-height: 14px;
    letter-spacing: -.2px;
    color: #111;
}

.stats-in {
    width: 104px;
    height: 14px;
    margin: 5px 0 2px 4px;
    background: #ddd;
    font-size: 11px;
    line-height: 14px;
    text-align: center;
    color: #777;
}

.stat {
    padding: 0 0 9px 2px;
    border-top: 1px solid #ccc;
}

.stat.size {
    padding-top: 1px;
    padding-bottom: 10px;
}

.stat h4 {
    font-size: 13px;
    font-weight: 500;
    line-height: 18px;
    letter-spacing: -.2px;
    color: #1a2030;
}

.stat p {
    font-size: 11.300px;
    font-weight: 500;
    line-height: 14px;
    color: #666;
}

.stat .lead {
    font-weight: 700;
}

.hidden-digit {
    filter: blur(1.500px);
    display: inline-block;
}

.stat.hot {
    background: #fdf3e3;
}

.stat-blur {
    width: 8px;
    height: 18px;
    margin-top: -3px;
    background: #ddd;
}

.spark {
    position: relative;
    height: 24px;
    background: linear-gradient(90deg, #e4e4e4, #f4f4f4 10px, transparent 10px);
}

.spark::before {
    content: '';
    position: absolute;
    left: 10px;
    right: 0;
    top: 0;
    height: 23px;
    background: linear-gradient(90deg, #fff 78px, #fbd99f 78px);
    border-top: 1px solid #bbb;
    border-bottom: 3px solid #777;
}

/* Floating window */
.dialog {
    position: absolute;
    left: 460px;
    top: 179px;
    width: 549px;
    height: 560px;
    padding: 0 7px 0 4px;
    background: linear-gradient(#fafafa, #ececec 22px);
    border: 1px solid #aaa;
    border-radius: 6px 6px 0 0;
    box-shadow: 0 0 4px rgba(0, 0, 0, .2);
}

.dialog-title {
    display: flex;
    justify-content: space-between;
    height: 23px;
    padding: 1px 0 0 1px;
    font: 700 11px/18px 'Noto Sans', sans-serif;
    color: #111;
}

.dialog-close {
    font: 400 17px/18px 'Liberation Sans', sans-serif;
    color: #444;
}

.dialog-body {
    height: 540px;
    background: #fff;
    border: 1px solid #999;
}

.dialog-top {
    display: flex;
    height: 68px;
    padding: 2px 0 0 3px;
}

.calls-on {
    display: flex;
    align-items: center;
    height: 20px;
    margin: 21px 0 0 94px;
    gap: 2px;
    color: #333;
    letter-spacing: .2px;
    font-size: 12px;
}

.calls-blur {
    width: 115px;
    height: 15px;
    background: #e2e2e2;
    filter: blur(3px);
}

.summary-row {
    display: flex;
    height: 113px;
}

.summary-wrap {
    position: relative;
    flex: 0 0 285px;
    padding-left: 54px;
}

.summary {
    width: 228px;
    height: 105px;
    background: #fce5bf;
    border: 1px solid #fad69a;
    border-width: 0 1px 1px;
}

.summary-head {
    height: 30px;
    padding-left: 71px;
    color: #333;
}

.summary-title {
    font: 700 10.500px/13px 'Noto Sans', sans-serif;
}

.summary-title em {
    font-weight: 400;
}

.summary-date {
    margin: 3px 0 0 -2px;
    font-size: 10px;
    font-style: italic;
    letter-spacing: .2px;
}

.summary-cols {
    display: flex;
    height: 12px;
    margin-left: -1px;
    background: #fdd293;
    line-height: 12px;
    color: #444;
}

.summary-cols span {
    position: relative;
    flex: 0 0 58px;
}

.filter::after {
    content: '';
    position: absolute;
    right: 5px;
    top: 2px;
    width: 9px;
    height: 9px;
    background: #c9c4d4;
    clip-path: polygon(0 0, 100% 0, 60% 50%, 60% 100%, 40% 80%, 40% 50%);
}

.summary-data {
    position: absolute;
    left: 5px;
    top: 45px;
    width: 278px;
    height: 56px;
    background: #f1eff4;
}

.data-label {
    position: absolute;
    left: 0;
    top: 1px;
    font: 700 13.500px/14px 'Noto Sans', sans-serif;
    color: #222;
}

.tag {
    position: absolute;
    left: 0;
    width: 42px;
    height: 15px;
    color: #fff;
    font: 700 11px/15px 'Liberation Sans', sans-serif;
    text-align: center;
    clip-path: polygon(0 0, 88% 0, 100% 50%, 88% 100%, 0 100%);
}

.tag.in { top: 19px; background: #97c5f7; }
.tag.out { top: 38px; background: #0a4a99; }

.data-blur {
    position: absolute;
    left: 91px;
    top: 20px;
    width: 15px;
    height: 32px;
    background: #d6d4d9;
    filter: blur(2px);
}

.hint {
    flex: 0 0 150px;
    margin-top: 26px;
    font-size: 10px;
    line-height: 11.100px;
    font-style: italic;
    text-align: center;
    color: #aaa;
}

.chart-panel {
    position: relative;
    width: 533px;
    border: 1px solid #888;
    background: #fff;
}

.chart-tools {
    display: flex;
    align-items: center;
    height: 33px;
    background: #f5f5f5;
    border-bottom: 1px solid #999;
    font-size: 11px;
}

.chart-type {
    display: flex;
    align-items: center;
    justify-content: center;
    flex: 0 0 32px;
    height: 21px;
    margin-left: 1px;
    border: 1px solid #33689c;
    border-radius: 2px;
    background: linear-gradient(#e6f0f8, #a8cbe8);
}

.chart-type-icon {
    margin-left: 6px;
}

.chart-type-icon + .chart-type-icon {
    margin-left: 15px;
}

.chart-sep {
    width: 1px;
    height: 14px;
    margin: 0 15px 0 13px;
    background: #ccc;
}

.chart-sep.wide {
    margin: 0 14px 0 46px;
}

.chart-label {
    flex: 0 0 46px;
    letter-spacing: .2px;
    color: #444;
}

.chart-label + .precision-combo {
    margin-left: 26px;
}

.draw-combo {
    width: 80px;
}

.precision-combo {
    width: 98px;
}

.chart {
    display: block;
    margin-left: -1px;
}

.y-labels text, .x-labels text, .date-labels text {
    font-family: 'Liberation Sans', sans-serif;
    font-size: 10px;
    fill: #666;
}

.x-labels .dim { fill: #ddd; }
.date-labels .mute { fill: #999; }

.chart-scroll {
    display: flex;
    position: absolute;
    left: 27px;
    top: 301px;
}

.arrow-btn.sm {
    flex-basis: 14px;
}

.mini {
    position: relative;
    width: 386px;
    height: 14px;
    background: #fff;
    border: 1px solid #aaa;
    border-width: 1px 0;
}

.mini-sel {
    position: absolute;
    left: 142px;
    top: 0;
    width: 70px;
    height: 11px;
    background: #f1f1f6;
}

.mini-rest {
    position: absolute;
    left: 212px;
    top: 0;
    width: 174px;
    height: 11px;
    background: #ececec;
    border-left: 2px solid #9be49b;
}

.mini-line {
    position: absolute;
    left: 0;
    top: 9px;
    width: 209px;
    height: 1px;
    background: #9ac8f8;
}

.mini-icon {
    margin-left: 4px;
}

.mini-mark {
    position: absolute;
    left: 252px;
    top: 316px;
    width: 16px;
    height: 4px;
    background: #f6a400;
}

/* Annotations */
.mark {
    position: absolute;
    border: 3px solid #f6444a;
    box-shadow: 0 1px 3px rgba(0, 0, 0, .35);
}

.mark-range {
    left: 1435px;
    top: 137px;
    width: 130px;
    height: 61px;
}

.mark-summary {
    left: 576px;
    top: 273px;
    width: 131px;
    height: 35px;
}

.mark-arrow {
    position: absolute;
    left: 718px;
    top: 143px;
    filter: drop-shadow(0 3px 2px rgba(0, 0, 0, .4));
}
```
